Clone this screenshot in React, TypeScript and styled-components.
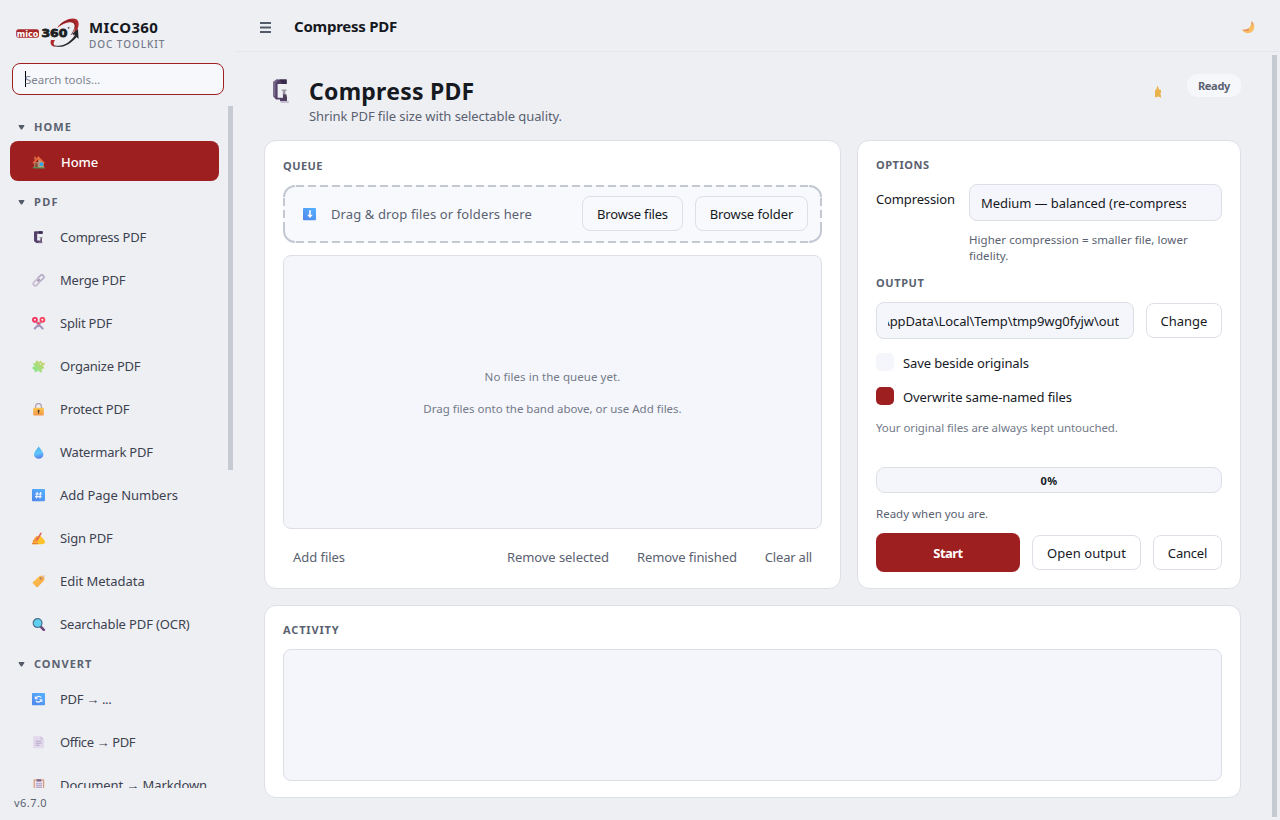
import React from 'react';
import styled, { createGlobalStyle, css } from 'styled-components';

const c = {
  bg: '#eeeff3',
  card: '#ffffff',
  field: '#f5f6fb',
  line: '#dcdfe6',
  thumb: '#c6cad3',
  red: '#9e1f1f',
  ink: '#16191f',
  nav: '#3c4250',
  mute: '#5a6271',
  faint: '#737a89',
};

const GlobalStyle = createGlobalStyle`
  * { box-sizing: border-box; }
  html, body { margin: 0; }
  body {
    width: 1280px;
    height: 820px;
    overflow: hidden;
    background: ${c.bg};
    color: ${c.ink};
    font: 400 13px/18px "Noto Sans", "Open Sans", sans-serif;
  }
`;

/* ---------- shell ---------- */

const Shell = styled.div`
  display: flex;
  width: 1280px;
  height: 820px;
`;

const Sidebar = styled.aside`
  display: flex;
  flex-direction: column;
  width: 236px;
  height: 820px;
`;

const Brand = styled.div`
  display: flex;
  height: 63px;
  padding: 17px 0 0 15px;
  gap: 9px;
`;

const BrandText = styled.div`
  display: flex;
  flex-direction: column;
`;

const BrandName = styled.div`
  font-size: 15px;
  font-weight: 700;
  line-height: 20px;
  letter-spacing: 0.3px;
`;

const BrandSub = styled.div`
  font-size: 10px;
  line-height: 14px;
  letter-spacing: 0.93px;
  font-weight: 500;
  color: ${c.faint};
`;

const Search = styled.div`
  display: flex;
  align-items: center;
  width: 212px;
  height: 32px;
  margin-left: 12px;
  padding-left: 12px;
  border: 1px solid ${c.red};
  border-radius: 8px;
  background: #f6f8fc;
  color: #80848e;
  font-size: 11.5px;
  letter-spacing: 0;
`;

const Placeholder = styled.span`
  padding-top: 2px;
`;

const Caret = styled.i`
  width: 1px;
  height: 16px;
  margin-right: -1px;
  background: #000;
`;

const NavViewport = styled.div`
  display: flex;
  justify-content: space-between;
  align-items: flex-start;
  height: 682px;
  margin-top: 11px;
  padding: 0 3px 0 10px;
  overflow: hidden;
`;

const Nav = styled.nav`
  width: 209px;
  padding-top: 3px;
`;

const NavThumb = styled.div`
  width: 5px;
  height: 364px;
  background: ${c.thumb};
`;

const Group = styled.div`
  display: flex;
  align-items: center;
  height: 32px;
  padding: 4px 0 0 8px;
  gap: 9px;
  font-size: 11px;
  font-weight: 700;
  color: ${c.mute};
`;

const Spaced = styled.span<{ $ls: number }>`
  letter-spacing: ${(p) => p.$ls}px;
  white-space: nowrap;
`;

const NavItem = styled.a<{ $active?: boolean }>`
  display: flex;
  align-items: center;
  height: 40px;
  margin-bottom: 3px;
  padding: 2px 0 0 22px;
  gap: 14px;
  border-radius: 8px;
  color: ${c.nav};
  ${(p) =>
    p.$active &&
    css`
      background: ${c.red};
      color: #fff;
      font-weight: 500;
      gap: 15px;
    `}
`;

const Version = styled.div`
  margin: 6px 0 0 14px;
  font-size: 11px;
  line-height: 18px;
  letter-spacing: 0.45px;
  color: ${c.mute};
`;

/* ---------- main ---------- */

const Main = styled.main`
  display: flex;
  flex-direction: column;
  flex: 1;
`;

const TopBar = styled.header`
  display: flex;
  align-items: center;
  height: 52px;
  padding: 4px 24px 0 24px;
  border-bottom: 1px solid #e5e7eb;
`;

const TopTitle = styled.div`
  flex: 1;
  margin: -3px 0 0 23px;
  font-size: 15px;
  font-weight: 700;
  line-height: 20px;
  letter-spacing: -0.24px;
`;

const Body = styled.div`
  display: flex;
  flex: 1;
  padding: 3px 3px 0 28px;
  justify-content: space-between;
`;

const PageThumb = styled.div`
  width: 5px;
  height: 762px;
  background: ${c.thumb};
`;

const Page = styled.section`
  width: 977px;
`;

const PageHead = styled.div`
  display: flex;
  height: 85px;
  padding-left: 8px;
  padding-top: 19px;
`;

const HeadIcon = styled.div`
  width: 37px;
  padding-top: 5px;
`;

const HeadText = styled.div`
  flex: 1;
`;

const H1 = styled.h1`
  margin: 2px 0 0;
  font-size: 23px;
  line-height: 30px;
  font-weight: 700;
  letter-spacing: 0.25px;
`;

const Sub = styled.p`
  margin: 1px 0 0;
  line-height: 18px;
  letter-spacing: -0.08px;
  color: ${c.mute};
`;

const StarBox = styled.div`
  width: 7px;
  margin: 11px 25px 0 0;
`;

const Pill = styled.div`
  width: 54px;
  height: 23px;
  border-radius: 10px;
  background: #f6f7fb;
  color: ${c.mute};
  font-size: 11px;
  font-weight: 700;
  line-height: 23px;
  text-align: center;
  letter-spacing: -0.3px;
`;

const Cards = styled.div`
  display: grid;
  grid-template-columns: 577px 384px;
  grid-template-rows: 449px 193px;
  gap: 16px;
`;

const Card = styled.div<{ $wide?: boolean }>`
  display: flex;
  flex-direction: column;
  padding: 15px 18px 16px;
  border: 1px solid ${c.line};
  border-radius: 12px;
  background: ${c.card};
  grid-column: ${(p) => (p.$wide ? '1 / 3' : 'auto')};
`;

const Label = styled.h2<{ $ls: number; $tall?: boolean }>`
  flex: none;
  height: ${(p) => (p.$tall ? 29 : 28)}px;
  margin: 0;
  font-size: 11px;
  line-height: ${(p) => (p.$tall ? 19 : 17)}px;
  font-weight: 700;
  letter-spacing: ${(p) => p.$ls}px;
  color: ${c.mute};
`;

const DropZone = styled.div`
  position: relative;
  display: flex;
  flex: none;
  align-items: flex-start;
  width: 539px;
  height: 58px;
  padding: 11px 14px 0 20px;
  border-radius: 13px;
  background: #f8f9fd;
`;

const DashFrame = styled.svg`
  position: absolute;
  left: 0;
  top: 0;
`;

const DropIcon = styled.div`
  padding-top: 12px;
`;

const DropText = styled.div`
  flex: 1;
  margin: 9px 0 0 14px;
  letter-spacing: 0.12px;
  color: ${c.mute};
`;

const Button = styled.button<{ $w: number; $ls?: number }>`
  width: ${(p) => p.$w}px;
  height: 35px;
  margin-left: 12px;
  padding: 1px 0 0;
  border: 1px solid ${c.line};
  border-radius: 8px;
  background: transparent;
  color: ${c.ink};
  font: inherit;
  letter-spacing: ${(p) => p.$ls ?? 0}px;
`;

const Primary = styled.button`
  width: 144px;
  height: 39px;
  padding: 1px 0 0;
  border: 0;
  border-radius: 8px;
  background: ${c.red};
  color: #fff;
  font: inherit;
  font-weight: 700;
  letter-spacing: -0.5px;
`;

const FileList = styled.div`
  display: flex;
  flex: none;
  flex-direction: column;
  align-items: center;
  height: 274px;
  margin-top: 12px;
  padding-top: 112px;
  border: 1px solid ${c.line};
  border-radius: 8px;
  background: ${c.field};
  font-size: 11.5px;
  line-height: 18px;
  gap: 14px;
  color: ${c.faint};
`;

const Actions = styled.div`
  display: flex;
  flex: none;
  align-items: center;
  height: 43px;
  padding: 13px 10px 0;
  gap: 28px;
  color: ${c.mute};
`;

const Grow = styled.div`
  flex: 1;
`;

const Row = styled.div<{ $top?: boolean }>`
  display: flex;
  align-items: ${(p) => (p.$top ? 'flex-start' : 'center')};
`;

const OptionName = styled.div`
  width: 93px;
  padding-top: 6px;
  letter-spacing: -0.14px;
`;

const Select = styled.div`
  width: 253px;
  height: 37px;
  padding: 0 35px 0 11px;
  border: 1px solid ${c.line};
  border-radius: 8px;
  background: ${c.field};
  line-height: 36px;
`;

const Clip = styled.div<{ $end?: boolean; $ls: number }>`
  display: flex;
  justify-content: ${(p) => (p.$end ? 'flex-end' : 'flex-start')};
  overflow: hidden;
  white-space: nowrap;
  letter-spacing: ${(p) => p.$ls}px;
`;

const PathField = styled.div`
  width: 258px;
  height: 37px;
  padding: 0 14px 0 11px;
  border: 1px solid ${c.line};
  border-radius: 8px;
  background: ${c.field};
  line-height: 36px;
`;

const Hint = styled.p`
  height: 42px;
  margin: 11px 0 0 93px;
  font-size: 11.5px;
  line-height: 16px;
  letter-spacing: 0.04px;
  color: ${c.mute};
`;

const Check = styled.div<{ $on?: boolean; $mt: number }>`
  display: flex;
  align-items: center;
  height: 18px;
  margin-top: ${(p) => p.$mt}px;
  gap: 9px;

  &::before {
    content: '';
    width: 18px;
    height: 18px;
    border-radius: 5px;
    background: ${(p) => (p.$on ? c.red : c.field)};
  }

  span {
    padding-top: 2px;
  }
`;

const Note = styled.p<{ $ls: number; $mt: number; $strong?: boolean }>`
  margin: ${(p) => p.$mt}px 0 0;
  font-size: 11.5px;
  line-height: 18px;
  letter-spacing: ${(p) => p.$ls}px;
  color: ${(p) => (p.$strong ? c.mute : c.faint)};
`;

const Progress = styled.div`
  height: 26px;
  margin-top: 30px;
  border: 1px solid ${c.line};
  border-radius: 9px;
  background: ${c.field};
  font-size: 11px;
  font-weight: 700;
  line-height: 25px;
  text-align: center;
  letter-spacing: 0.5px;
`;

const Log = styled.div`
  height: 132px;
  border: 1px solid ${c.line};
  border-radius: 8px;
  background: ${c.field};
`;

/* ---------- drawings ---------- */

const Icon = styled.svg`
  display: block;
  flex: none;
`;

const ClampShape = () => (
  <>
    <path d="M17.6 1.6H7.5L4 4v14l3 3.4h4V23h7v-4.6h-4v1.4H8.6V6h9Z" fill="#54416a" />
    <path d="M4 4 7.5 1.6h1.6L6.4 5v13.6L4 18Z" fill="#7a6a8c" />
    <path d="M10.4 1.6h7.2V6h-4.6Z" fill="#38294a" />
    <path d="M12.6 11.4h5v1.3h-1.2v4.7h-2.6v-4.7h-1.2Z" fill="#9a94a2" />
    <path d="M14 16.4h3.6v6.2H14Z" fill="#4d4058" />
    <path d="M11.4 23.4h8.4v1.2h-8.4Z" fill="#ab9cb8" />
  </>
);

const glyphs: Record<string, React.ReactNode> = {
  home: (
    <>
      <path d="M2 6h9.6v6H2Z" fill="#a8795f" />
      <path d="M2 .6h2.2v3H2Z" fill="#c06040" />
      <path d="M.4 6.8 6.4.3l6.4 6.5-1.2.9L6.4 3 1.6 7.6Z" fill="#f0683c" />
      <path d="m6.4 2.8 5.2 4.6V12H6.4Z" fill="#c99b78" />
      <path d="M3.4 7.5h2V12h-2Z" fill="#7c4937" />
      <path d="M7.6 6.6h3.6v3.2H7.6Z" fill="#28a8ee" />
      <path d="M.8 11.2h12v1.2H.8Z" fill="#4f9c58" />
    </>
  ),
  clamp: (
    <>
      <path d="M2 1.3Q2 .3 3 .3h7.6v2.5H5.2v6.8H7V12H4.2L2 10Z" fill="#54416a" />
      <path d="M6.5.3h4.1v2.5H7Z" fill="#3c2d50" />
      <path d="M7.6 6.2h3v1.1h-3Z" fill="#8d8696" />
      <path d="M8.3 7.3H10V12H7V9.6h1.3Z" fill="#68587a" />
      <path d="M6 11.3h4.6v.9H6Z" fill="#8c7c9c" />
    </>
  ),
  link: (
    <g fill="none" strokeWidth="1.7">
      <rect x="-3.5" y="-2" width="7" height="4" rx="2" transform="translate(8.8 4) rotate(-45)" stroke="#b9acc6" />
      <rect x="-3.5" y="-2" width="7" height="4" rx="2" transform="translate(4.4 8.6) rotate(-45)" stroke="#c6bad0" />
      <path d="M5.5 7.4 7.7 5.2" stroke="#a797b6" />
    </g>
  ),
  scissors: (
    <>
      <path d="m2.8 11.4 5.8-6M10.6 11.4l-5.8-6" stroke="#a797bf" strokeWidth="2.2" strokeLinecap="round" />
      <path d="M4.6 6.4 6.6 4.4 8.6 6.4 6.6 8Z" fill="#e9586b" />
      <circle cx="2.9" cy="2.8" r="2" fill="none" stroke="#f5325f" strokeWidth="1.9" />
      <circle cx="10.4" cy="2.8" r="2" fill="none" stroke="#fa4560" strokeWidth="1.9" />
    </>
  ),
  puzzle: (
    <>
      <path
        d="M.8 3.6 3.6 3Q3.2.6 5 .4 6.8.6 6.2 2.4L8.8.4l1.5 2.6Q12.6 2 13 3.8 12.6 5.6 10.7 5.2L12.4 8.2 9.6 9.2Q10.8 12.2 8.6 12.6 6.6 12.4 7.2 10.2L3.2 12.4 2 9.4Q0 9.2.4 7.4 1.4 6 3 7Z"
        fill="url(#leaf)"
      />
      <circle cx="8.4" cy="4" r=".8" fill="#eeeff3" />
    </>
  ),
  lock: (
    <>
      <path d="M3.6 5.6V3.4a2.9 2.9 0 0 1 5.8 0v2.2" fill="none" stroke="#b2a5b9" strokeWidth="1.4" />
      <rect x="1.2" y="4.8" width="10.6" height="7.6" rx="1" fill="url(#amber)" />
      <circle cx="6.6" cy="7.9" r="1.1" fill="#5a3c3c" />
      <path d="M6.1 8h1v2.8h-1Z" fill="#5a3c3c" />
    </>
  ),
  drop: (
    <path d="M6.8.2C7.4 2 11.4 5.5 11.4 8.4a4.6 4.3 0 0 1-9.4 0C2 5.5 6.2 2 6.8.2Z" fill="url(#water)" />
  ),
  hash: (
    <>
      <rect width="13" height="12.3" rx=".8" fill="url(#sky)" />
      <path d="M5.2 3 4.5 9.4M8.6 3l-.7 6.4M3.2 5h6.6M3 7.6h6.6" stroke="#f3f3ff" strokeWidth="1.2" />
    </>
  ),
  sign: (
    <>
      <path d="M.2 11.6 5 4.6l3.4-.8 4.4 4.6v3.2L9 12.2H.4Z" fill="#fdc22c" />
      <path d="M1 8.6 4.4 4l3 1.2-2.2 5-4.6.6Z" fill="#f79a35" />
      <path d="M4.6 8.4 9.2.8" stroke="#e0605a" strokeWidth="1.6" />
      <path d="M0 11h6v1.2H0Z" fill="#e8813a" />
    </>
  ),
  tag: (
    <>
      <path d="M8 .8h4.2L12.4 5 6 11.8Q5 12.6 4 11.6L.9 8.6Q.2 7.8 1 7Z" fill="#fbb94c" />
      <path d="M12.4 5 6 11.8Q5 12.6 4 11.6L3 10.6 11 2.4Z" fill="#f8a94c" opacity=".5" />
      <circle cx="9" cy="3.3" r="1.4" fill="#c07f50" />
      <path d="M9 3.3 12.6.6" stroke="#cdbac4" strokeWidth="1" />
    </>
  ),
  search: (
    <>
      <path d="m9.2 9.2 2.6 2.6" stroke="#6f4579" strokeWidth="2.6" strokeLinecap="round" />
      <circle cx="5.6" cy="5.1" r="4.4" fill="#5ed0ee" stroke="#4e7090" strokeWidth="1.2" />
    </>
  ),
  sync: (
    <>
      <rect width="13" height="12.3" rx=".8" fill="url(#sky)" />
      <path d="M4 5.2a3 3 0 0 1 5.2-.6M9.2 7.2A3 3 0 0 1 4 7.8" fill="none" stroke="#eef1ff" strokeWidth="1.4" />
      <path d="M2.8 2.8v3.5h3.4ZM10.4 9.6V6.2H7Z" fill="#eef1ff" />
    </>
  ),
  page: (
    <>
      <path d="M1.2.2H9L12 3.4v8.9H1.2Z" fill="#e2d9ec" />
      <path d="M8.6.2 12 3.6H8.6Z" fill="#cdbfda" />
      <path d="M3.5 5.2h6M3.5 7.2h6M3.5 9.2h4" stroke="#b7aac6" strokeWidth="1" />
    </>
  ),
  clip: (
    <>
      <path d="M1.6.4h10.6v12H1.6Z" fill="#d99a78" />
      <path d="M2.8 1.6h8.2v10.2H2.8Z" fill="#e9e0f0" />
      <path d="M4.6.2h4.6v2.4H4.6Z" fill="#80668c" />
      <path d="M4 4.8h6M4 6.8h6M4 8.8h6" stroke="#a898b8" strokeWidth="1" />
    </>
  ),
  down: (
    <>
      <rect width="13" height="12.3" rx=".8" fill="url(#sky)" />
      <path d="M6.2 2.2h1.6v4.6h2L7 9.9 4.2 6.8h2Z" fill="#fff" />
    </>
  ),
  moon: (
    <>
      <path d="M9.4.2Q12.6 2 12.3 6.2 11.4 12 5.6 12.2 1.6 12 .2 8.6q3.6.8 6.2-1.2Q9.6 5 9.4.2Z" fill="#f9bd63" />
      <path d="M.2 8.6q3.6.8 6.2-1.2L7 9.6Q3 11 .2 8.6Z" fill="#e78d58" />
      <path d="M9.4.2Q10.6 1 11.2 2.2L10 5.6Q9.6 3 9.4.2Z" fill="#df9c72" />
    </>
  ),
};

const Emoji = ({ name }: { name: string }) => (
  <Icon width="14" height="13" viewBox="0 0 14 13">
    {glyphs[name]}
  </Icon>
);

const Gradients = styled.svg`
  position: absolute;
`;

const Defs = () => (
  <Gradients width="0" height="0">
    <defs>
      <linearGradient id="leaf" x1="1" y1="0" x2="0" y2="1">
        <stop offset="0" stopColor="#d6cf62" />
        <stop offset="1" stopColor="#7eea90" />
      </linearGradient>
      <linearGradient id="amber" x1="0" y1="0" x2="0" y2="1">
        <stop offset="0" stopColor="#fbc54a" />
        <stop offset="1" stopColor="#f5974c" />
      </linearGradient>
      <linearGradient id="water" x1="0" y1="0" x2="0.2" y2="1">
        <stop offset="0" stopColor="#4aa4e0" />
        <stop offset="0.6" stopColor="#5ec8fc" />
        <stop offset="1" stopColor="#5a86ee" />
      </linearGradient>
      <linearGradient id="sky" x1="0" y1="1" x2="0.7" y2="0">
        <stop offset="0" stopColor="#4f84e8" />
        <stop offset="1" stopColor="#55adff" />
      </linearGradient>
    </defs>
  </Gradients>
);

const LogoText = styled.text`
  font-family: "DejaVu Sans", sans-serif;
  font-weight: 700;
`;

const Logo = () => (
  <Icon width="65" height="32" viewBox="0 0 65 32">
    <path d="M42 11C48 2 60-1 63 4c2 4-1 11-5 15 2-6 3-11 0-13-4-2-9 0-16 5Z" fill="#b0292b" />
    <path d="M45 8C51 3 58 2 60 6c1 3-1 8-4 12" fill="none" stroke="#6c2022" strokeWidth=".8" />
    <path d="M36 23c-2 6 3 8 9 6-2 1-5 1-6-1s0-3 1-5Z" fill="#b0292b" />
    <path d="M37 27c8 5 18-1 23-9l-3-1 6-5 .6 10-2-2C54 29 44 33 37 27Z" fill="#24262a" />
    <rect x="1.2" y="12.2" width="22.8" height="8.6" rx="2.4" fill="#a8282b" />
    <LogoText
      x="1.8"
      y="19.6"
      fontSize="9.4"
      textLength="21.6"
      lengthAdjust="spacingAndGlyphs"
      fill="#fff"
    >
      mico
    </LogoText>
    <LogoText
      x="26.4"
      y="20.3"
      fontSize="11"
      textLength="26"
      lengthAdjust="spacingAndGlyphs"
      fill="#1d1e22"
      stroke="#1d1e22"
      strokeWidth=".8"
    >
      360
    </LogoText>
    <circle cx="53.6" cy="10.8" r=".9" fill="#4a4c52" />
  </Icon>
);

const Arrow = () => (
  <Icon width="7" height="5" viewBox="0 0 7 5">
    <path d="M1 0h5q.7.3.3 1L4.2 4.3q-.7.5-1.4 0L.7 1Q.3.3 1 0Z" fill="#535b69" />
  </Icon>
);

const Frame = () => (
  <DashFrame width="539" height="58" fill="none" stroke="#c3c8d3" strokeWidth="2">
    <path d="M13 1h512M13 57h512M1 13v32M538 13v32" strokeDasharray="8 4" />
    <path d="M1 12A11 11 0 0 1 12 1M526 1a12 11 0 0 1 12 11M1 46v-8M1 46a11 11 0 0 0 11 11M538 38v8a12 11 0 0 1-12 11" />
  </DashFrame>
);

/* ---------- content ---------- */

type Item = [icon: string, text: string, spacing: number];

const groups: { title: string; spacing: number; items: Item[] }[] = [
  { title: 'HOME', spacing: 1.1, items: [['home', 'Home', -0.05]] },
  {
    title: 'PDF',
    spacing: 1.35,
    items: [
      ['clamp', 'Compress PDF', -0.22],
      ['link', 'Merge PDF', -0.21],
      ['scissors', 'Split PDF', -0.22],
      ['puzzle', 'Organize PDF', -0.22],
      ['lock', 'Protect PDF', -0.17],
      ['drop', 'Watermark PDF', -0.24],
      ['hash', 'Add Page Numbers', -0.04],
      ['sign', 'Sign PDF', -0.18],
      ['tag', 'Edit Metadata', -0.03],
      ['search', 'Searchable PDF (OCR)', -0.13],
    ],
  },
  {
    title: 'CONVERT',
    spacing: 1,
    items: [
      ['sync', 'PDF → ...', -0.33],
      ['page', 'Office → PDF', -0.4],
      ['clip', 'Document → Markdown', -0.1],
    ],
  },
];

export default function App() {
  return (
    <Shell>
      <GlobalStyle />
      <Defs />
      <Sidebar>
        <Brand>
          <Logo />
          <BrandText>
            <BrandName>MICO360</BrandName>
            <BrandSub>DOC TOOLKIT</BrandSub>
          </BrandText>
        </Brand>
        <Search>
          <Caret />
          <Placeholder>Search tools...</Placeholder>
        </Search>
        <NavViewport>
          <Nav>
            {groups.map((g) => (
              <React.Fragment key={g.title}>
                <Group>
                  <Arrow />
                  <Spaced $ls={g.spacing}>{g.title}</Spaced>
                </Group>
                {g.items.map(([icon, text, ls]) => (
                  <NavItem key={text} $active={icon === 'home'}>
                    <Emoji name={icon} />
                    <Spaced $ls={ls}>{text}</Spaced>
                  </NavItem>
                ))}
              </React.Fragment>
            ))}
          </Nav>
          <NavThumb />
        </NavViewport>
        <Version>v6.7.0</Version>
      </Sidebar>

      <Main>
        <TopBar>
          <Icon width="11" height="11" viewBox="0 0 11 11">
            <path d="M0 0h11v2H0ZM0 4.5h11v2H0ZM0 9h11v2H0Z" fill="#535b69" />
          </Icon>
          <TopTitle>Compress PDF</TopTitle>
          <Emoji name="moon" />
        </TopBar>
        <Body>
          <Page>
            <PageHead>
              <HeadIcon>
                <Icon width="21" height="26" viewBox="3 1 21 26">
                  <ClampShape />
                </Icon>
              </HeadIcon>
              <HeadText>
                <H1>Compress PDF</H1>
                <Sub>Shrink PDF file size with selectable quality.</Sub>
              </HeadText>
              <StarBox>
                <Icon width="7" height="13" viewBox="0 0 7 13">
                  <path d="M0 5.4 1.2 4.6 2.6.4 4 4.6 6 5v3L5 9l1 1v2.8L3.4 11.6 0 12.6Z" fill="#e8b24c" />
                </Icon>
              </StarBox>
              <Pill>Ready</Pill>
            </PageHead>
            <Cards>
              <Card>
                <Label $ls={0.45} $tall>QUEUE</Label>
                <DropZone>
                  <Frame />
                  <DropIcon>
                    <Emoji name="down" />
                  </DropIcon>
                  <DropText>Drag &amp; drop files or folders here</DropText>
                  <Button $w={101} $ls={-0.19}>Browse files</Button>
                  <Button $w={113} $ls={-0.08}>Browse folder</Button>
                </DropZone>
                <FileList>
                  <Spaced $ls={0.06}>No files in the queue yet.</Spaced>
                  <Spaced $ls={-0.01}>Drag files onto the band above, or use Add files.</Spaced>
                </FileList>
                <Actions>
                  <Spaced $ls={-0.05}>Add files</Spaced>
                  <Grow />
                  <Spaced $ls={-0.07}>Remove selected</Spaced>
                  <Spaced $ls={-0.09}>Remove finished</Spaced>
                  <Spaced $ls={-0.2}>Clear all</Spaced>
                </Actions>
              </Card>

              <Card>
                <Label $ls={0.52}>OPTIONS</Label>
                <Row $top>
                  <OptionName>Compression</OptionName>
                  <Select>
                    <Clip $ls={-0.07}>Medium — balanced (re-compress images)</Clip>
                  </Select>
                </Row>
                <Hint>Higher compression = smaller file, lower fidelity.</Hint>
                <Label $ls={0.6}>OUTPUT</Label>
                <Row>
                  <PathField>
                    <Clip $end $ls={-0.1}>AppData\Local\Temp\tmp9wg0fyjw\out</Clip>
                  </PathField>
                  <Button $w={76} $ls={0}>Change</Button>
                </Row>
                <Check $mt={14}>
                  <Spaced $ls={-0.11}>Save beside originals</Spaced>
                </Check>
                <Check $mt={16} $on>
                  <Spaced $ls={-0.12}>Overwrite same-named files</Spaced>
                </Check>
                <Note $ls={-0.07} $mt={14}>Your original files are always kept untouched.</Note>
                <Progress>0%</Progress>
                <Note $ls={0} $mt={12} $strong>Ready when you are.</Note>
                <Grow />
                <Row>
                  <Primary>Start</Primary>
                  <Button $w={109} $ls={0.06}>Open output</Button>
                  <Button $w={69} $ls={-0.2}>Cancel</Button>
                </Row>
              </Card>

              <Card $wide>
                <Label $ls={0.85}>ACTIVITY</Label>
                <Log />
              </Card>
            </Cards>
          </Page>
          <PageThumb />
        </Body>
      </Main>
    </Shell>
  );
}
